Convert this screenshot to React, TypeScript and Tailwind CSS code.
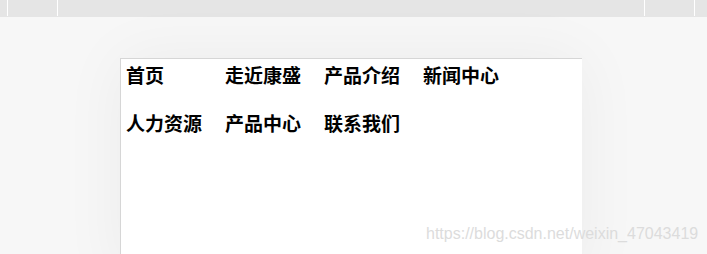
const navItems = ['首页', '走近康盛', '产品介绍', '新闻中心', '人力资源', '产品中心', '联系我们'];

export default function App() {
  return (
    <div className="relative h-[254px] w-[707px] overflow-hidden bg-[#f7f7f7]">
      {/* top strip */}
      <div className="flex h-[17px] justify-between bg-[#e5e5e5] pl-[7px] pr-[12px]">
        <div className="flex gap-[49px]">
          <span className="h-[16px] w-[1px] bg-white" />
          <span className="h-[16px] w-[1px] bg-white" />
        </div>
        <div className="flex gap-[49px]">
          <span className="h-[16px] w-[1px] bg-white" />
          <span className="h-[16px] w-[1px] bg-white" />
        </div>
      </div>

      {/* page */}
      <div className="ml-[120px] mt-[41px] h-[220px] w-[462px] border-l border-t border-[#d6d6d6] bg-white shadow-[0_0_60px_rgba(0,0,0,0.05)]">
        <ul className="flex flex-wrap pl-[5px] pt-[4px] font-['Noto_Sans_CJK_SC',sans-serif] text-[19px] font-bold leading-[24px] text-black">
          {navItems.map((item) => (
            <li key={item} className="h-[48px] w-[99px]">
              {item}
            </li>
          ))}
        </ul>
      </div>

      {/* watermark */}
      <div className="absolute left-[426px] top-[226px] font-['Liberation_Sans',Arial,sans-serif] text-[16px] leading-none text-[#dcdcdc]">
        https://blog.csdn.net/weixin_47043419
      </div>
    </div>
  );
}
